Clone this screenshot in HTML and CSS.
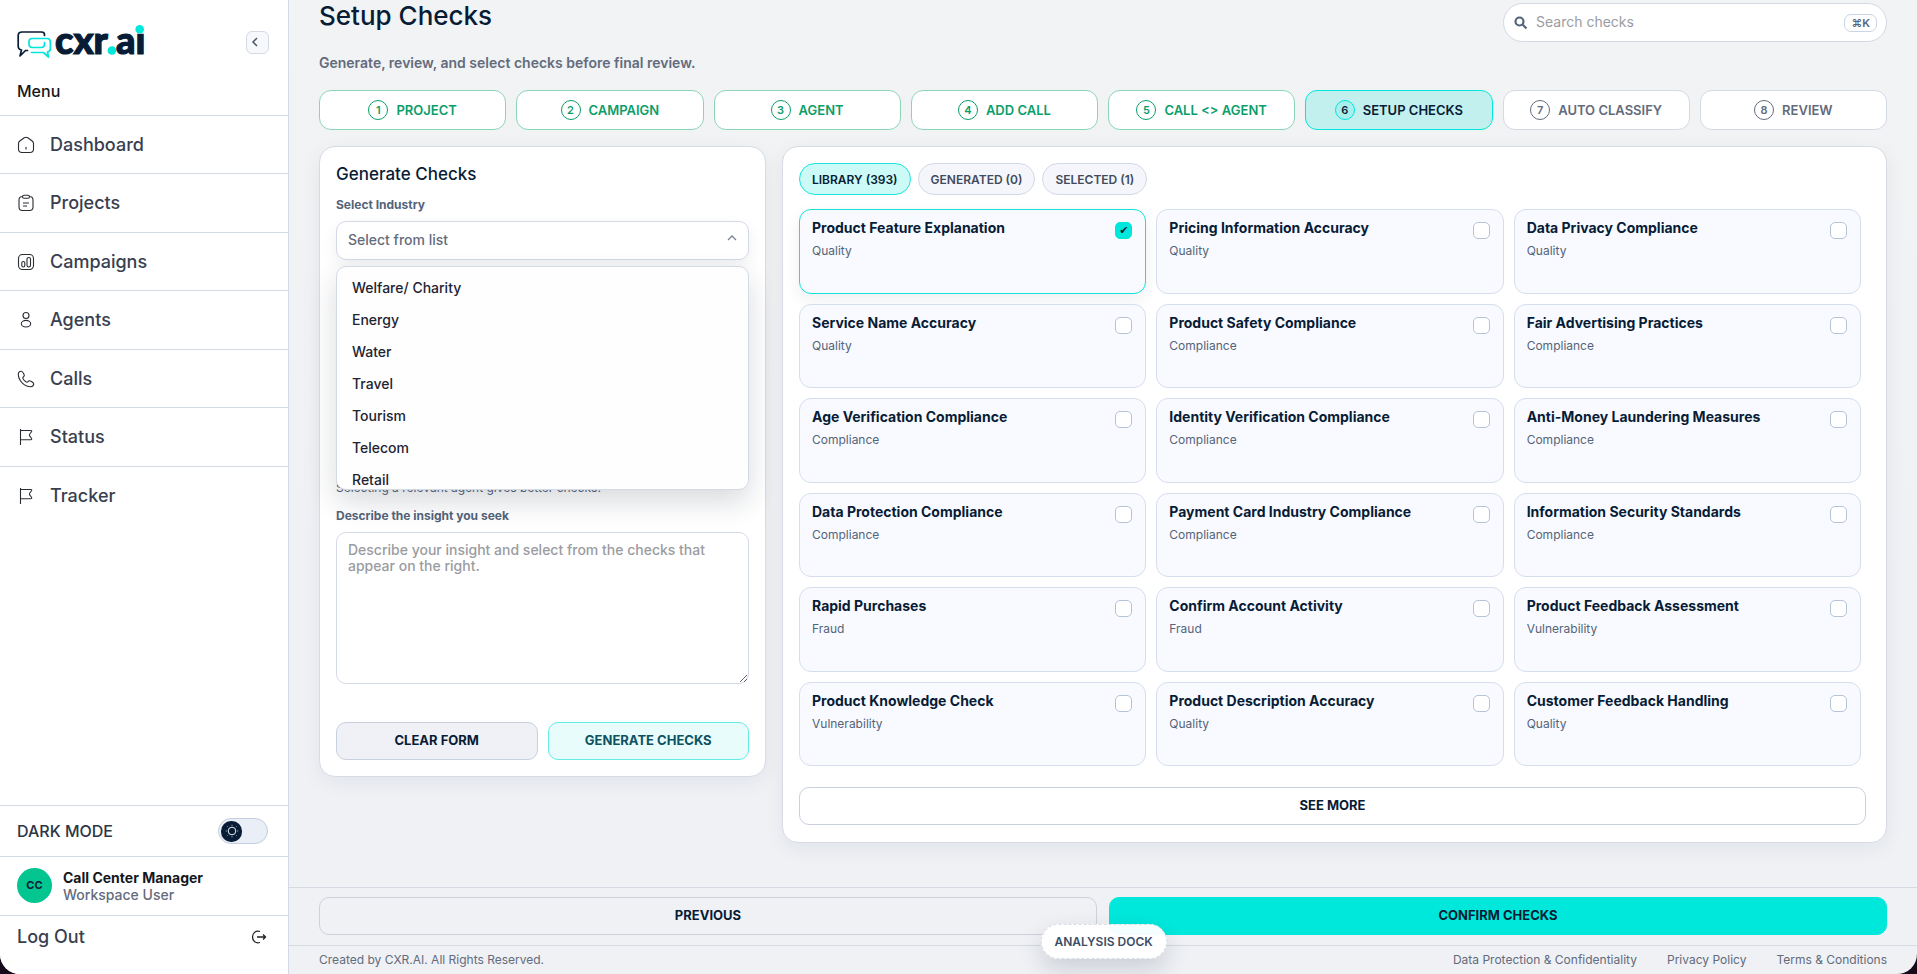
FILE: index.html
```html
<!DOCTYPE html>
<html lang="en">
<head>
<meta charset="utf-8">
<meta name="viewport" content="width=device-width, initial-scale=1">
<title>Setup Checks – cxr.ai</title>
<link rel="stylesheet" href="styles.css">
</head>
<body>
<div class="app">
  <aside class="sidebar">
    <div class="brand">
      <svg class="logo" width="130" height="38" viewBox="0 0 130 38" role="img" aria-label="cxr.ai">
        <g fill="none" stroke-width="1.7" stroke-linejoin="round" stroke-linecap="round">
          <path stroke="#081c36" d="M27.500 12.500V11.500Q27.500 9 24.500 9H5Q1.200 9 1.200 12.500V23Q1.200 26.500 4.500 27L3 33L8.500 27.500H10.500"/>
          <path stroke="#00e8dc" d="M14.500 29.500H26.500L31.500 34L30.500 29Q33.300 28.500 33.300 25.500V19Q33.300 15.500 30 15.500H15Q12 15.500 12 18.500V21Q12 24.500 15.500 24.500H24Q27.500 24.500 27.500 21V19.500"/>
        </g>
        <g class="logo-text">
          <text x="38" y="31">cxr</text>
          <text class="logo-accent" x="89" y="31">.</text>
          <text x="99" y="31">ai</text>
        </g>
        <rect x="117" y="0" width="12" height="10.500" fill="#fff"/>
        <circle cx="95" cy="27.500" r="4.200" fill="#00e8dc"/>
        <circle cx="122.700" cy="6.200" r="4.300" fill="#00e8dc"/>
      </svg>
      <button class="collapse" aria-label="Collapse menu"><svg width="16" height="16" viewBox="0 0 16 16"><path d="M9 4L5 8L9 12"/></svg></button>
    </div>
    <h2 class="menu-title">Menu</h2>
    <nav class="nav">
      <a href="#"><svg viewBox="0 0 18 18"><path d="M1.500 7.500Q1.500 6 2.800 5L7.200 1.800Q9 .7 10.800 1.800L15.200 5Q16.500 6 16.500 7.500V13Q16.500 16.500 13 16.500H5Q1.500 16.500 1.500 13ZM9 11V13.500"/></svg>Dashboard</a>
      <a href="#"><svg viewBox="0 0 18 18"><path d="M5.500 2.500Q2 2.500 2 6V13Q2 16.500 5.500 16.500H12.500Q16 16.500 16 13V6Q16 2.500 12.500 2.500M7 1.200H11Q12.500 1.200 12.500 2.700Q12.500 4.200 11 4.200H7Q5.500 4.200 5.500 2.700Q5.500 1.200 7 1.200ZM6 9H12M6 12H10"/></svg>Projects</a>
      <a href="#"><svg viewBox="0 0 18 18"><rect x="1.500" y="1.500" width="15" height="15" rx="4"/><rect x="4.800" y="8.500" width="3" height="5.500" rx="1.500"/><rect x="10" y="4.500" width="3.500" height="9.500" rx="1.700"/></svg>Campaigns</a>
      <a href="#"><svg viewBox="0 0 18 18"><circle cx="9" cy="4.500" r="3"/><ellipse cx="9" cy="12.700" rx="4.700" ry="3.300"/></svg>Agents</a>
      <a href="#"><svg viewBox="0 0 18 18"><path d="M4.200 1.300C2.300 1.300 1.300 2.700 1.300 4.300C1.300 10.500 7.500 16.700 13.700 16.700C15.500 16.700 16.700 15.500 16.700 13.800C16.700 12.600 13.300 10.700 12.200 10.700C11.200 10.700 11.200 12.200 10 12.200C8.800 12.200 5.800 9.200 5.800 8C5.800 6.800 7.300 6.800 7.300 5.600C7.300 4.500 5.500 1.300 4.200 1.300Z"/></svg>Calls</a>
      <a href="#"><svg viewBox="0 0 18 18"><path d="M3.500 1V17M3.500 2.500H13.500Q15.500 2.500 14.300 4L12.800 6Q12 7.200 12.800 8.200L14.300 10Q15.500 11.800 13.500 11.800H3.500"/></svg>Status</a>
      <a href="#"><svg viewBox="0 0 18 18"><path d="M3.500 1V17M3.500 2.500H13.500Q15.500 2.500 14.300 4L12.800 6Q12 7.200 12.800 8.200L14.300 10Q15.500 11.800 13.500 11.800H3.500"/></svg>Tracker</a>
    </nav>
    <div class="side-bottom">
      <div class="mode">
        <span>DARK MODE</span>
        <button class="switch" role="switch" aria-checked="false" aria-label="Dark mode"><span class="knob"><svg width="14" height="14" viewBox="0 0 14 14"><circle cx="7" cy="7" r="3.800"/><path d="M7 .8V1.600M7 12.400V13.200M.8 7H1.600M12.400 7H13.200M2.600 2.600L3 3M11 11L11.400 11.400M11.400 2.600L11 3M3 11L2.600 11.400"/></svg></span></button>
      </div>
      <div class="user">
        <span class="avatar">CC</span>
        <div><div class="user-name">Call Center Manager</div><div class="user-role">Workspace User</div></div>
      </div>
      <a class="logout" href="#">Log Out<svg width="18" height="18" viewBox="0 0 18 18"><path d="M10 3.500C5.500 2 2.500 5.500 2.500 9C2.500 12.500 5.500 16 10 14.500M7 9H15.500M13 6.500L15.500 9L13 11.500"/></svg></a>
    </div>
  </aside>

  <div class="main">
    <main class="content">
      <header class="head">
        <div>
          <h1>Setup Checks</h1>
          <p class="subtitle">Generate, review, and select checks before final review.</p>
        </div>
        <div class="search">
          <svg width="14" height="14" viewBox="0 0 14 14"><circle cx="5.500" cy="5.500" r="4"/><path d="M8.800 8.800L12.500 12.500"/></svg>
          <input type="search" placeholder="Search checks" aria-label="Search checks">
          <kbd>⌘K</kbd>
        </div>
      </header>

      <ol class="steps">
        <li class="done"><span class="num">1</span>PROJECT</li>
        <li class="done"><span class="num">2</span>CAMPAIGN</li>
        <li class="done"><span class="num">3</span>AGENT</li>
        <li class="done"><span class="num">4</span>ADD CALL</li>
        <li class="done"><span class="num">5</span>CALL &lt;&gt; AGENT</li>
        <li class="current" aria-current="step"><span class="num">6</span>SETUP CHECKS</li>
        <li><span class="num">7</span>AUTO CLASSIFY</li>
        <li><span class="num">8</span>REVIEW</li>
      </ol>

      <div class="columns">
        <form class="panel generate">
          <h2>Generate Checks</h2>
          <div class="field field-open">
            <label for="industry">Select Industry</label>
            <div class="select-wrap">
              <select id="industry"><option>Select from list</option></select>
              <svg class="chevron" width="12" height="12" viewBox="0 0 12 12"><path d="M2 8L6 4L10 8"/></svg>
              <ul class="options" role="listbox" aria-label="Industry">
                <li role="option">Welfare/ Charity</li>
                <li role="option">Energy</li>
                <li role="option">Water</li>
                <li role="option">Travel</li>
                <li role="option">Tourism</li>
                <li role="option">Telecom</li>
                <li role="option">Retail</li>
              </ul>
            </div>
            <p class="hint">Selecting an industry helps to tailor the checks.</p>
          </div>
          <div class="field">
            <label for="campaign">Select Campaign</label>
            <select id="campaign"><option>Select from list</option></select>
            <p class="hint">Selecting a campaign keeps checks in context.</p>
          </div>
          <div class="field">
            <label for="agent">Select Agent Type</label>
            <select id="agent"><option>Select from list</option></select>
            <p class="hint">Selecting a relevant agent gives better checks.</p>
          </div>
          <div class="field">
            <label for="insight">Describe the insight you seek</label>
            <textarea id="insight" placeholder="Describe your insight and select from the checks that appear on the right."></textarea>
          </div>
          <div class="form-actions">
            <button type="reset" class="btn btn-grey">CLEAR FORM</button>
            <button type="button" class="btn btn-mint">GENERATE CHECKS</button>
          </div>
        </form>

        <section class="panel library">
          <div class="tabs" role="tablist">
            <button class="tab active" role="tab" aria-selected="true">LIBRARY (393)</button>
            <button class="tab" role="tab">GENERATED (0)</button>
            <button class="tab" role="tab">SELECTED (1)</button>
          </div>
          <div class="cards">
            <label class="card selected"><span><b>Product Feature Explanation</b><small>Quality</small></span><input type="checkbox" checked></label>
            <label class="card"><span><b>Pricing Information Accuracy</b><small>Quality</small></span><input type="checkbox"></label>
            <label class="card"><span><b>Data Privacy Compliance</b><small>Quality</small></span><input type="checkbox"></label>
            <label class="card"><span><b>Service Name Accuracy</b><small>Quality</small></span><input type="checkbox"></label>
            <label class="card"><span><b>Product Safety Compliance</b><small>Compliance</small></span><input type="checkbox"></label>
            <label class="card"><span><b>Fair Advertising Practices</b><small>Compliance</small></span><input type="checkbox"></label>
            <label class="card"><span><b>Age Verification Compliance</b><small>Compliance</small></span><input type="checkbox"></label>
            <label class="card"><span><b>Identity Verification Compliance</b><small>Compliance</small></span><input type="checkbox"></label>
            <label class="card"><span><b>Anti-Money Laundering Measures</b><small>Compliance</small></span><input type="checkbox"></label>
            <label class="card"><span><b>Data Protection Compliance</b><small>Compliance</small></span><input type="checkbox"></label>
            <label class="card"><span><b>Payment Card Industry Compliance</b><small>Compliance</small></span><input type="checkbox"></label>
            <label class="card"><span><b>Information Security Standards</b><small>Compliance</small></span><input type="checkbox"></label>
            <label class="card"><span><b>Rapid Purchases</b><small>Fraud</small></span><input type="checkbox"></label>
            <label class="card"><span><b>Confirm Account Activity</b><small>Fraud</small></span><input type="checkbox"></label>
            <label class="card"><span><b>Product Feedback Assessment</b><small>Vulnerability</small></span><input type="checkbox"></label>
            <label class="card"><span><b>Product Knowledge Check</b><small>Vulnerability</small></span><input type="checkbox"></label>
            <label class="card"><span><b>Product Description Accuracy</b><small>Quality</small></span><input type="checkbox"></label>
            <label class="card"><span><b>Customer Feedback Handling</b><small>Quality</small></span><input type="checkbox"></label>
          </div>
          <button class="btn see-more">SEE MORE</button>
        </section>
      </div>
    </main>

    <div class="actions">
      <button class="btn btn-outline">PREVIOUS</button>
      <button class="btn btn-primary">CONFIRM CHECKS</button>
    </div>
    <footer class="footer">
      <span>Created by CXR.AI. All Rights Reserved.</span>
      <nav>
        <a href="#">Data Protection &amp; Confidentiality</a>
        <a href="#">Privacy Policy</a>
        <a href="#">Terms &amp; Conditions</a>
      </nav>
    </footer>
  </div>
  <button class="dock">ANALYSIS DOCK</button>
</div>
</body>
</html>
```
FILE: styles.css
```css
* { box-sizing: border-box; }

:root {
  --navy: #081c36;
  --cyan: #00e8dc;
  --line: #d3d9e5;
  --grey: #636b7c;
  --slate: #53647a;
}

body {
  margin: 0;
  background: #170a1a;
  font-family: Inter, "Liberation Sans", sans-serif;
  font-size: 14px;
  color: var(--navy);
}

h1, h2, p, ul, ol { margin: 0; padding: 0; }
ul, ol { list-style: none; }
a { color: inherit; text-decoration: none; }
button, input, select, textarea { font: inherit; color: inherit; }
button { cursor: pointer; }
svg { display: block; flex: none; fill: none; }

.app {
  position: relative;
  display: flex;
  min-height: 100vh;
  overflow: hidden;
  border-radius: 0 0 20px 20px;
  background: linear-gradient(#f1f3f4, #eff1f5 60%);
}

/* Sidebar */
.sidebar {
  flex: 0 0 289px;
  display: flex;
  flex-direction: column;
  background: #fff;
  border-right: 1px solid var(--line);
}

.brand {
  display: flex;
  justify-content: space-between;
  align-items: center;
  padding: 23px 19px 0 17px;
}

.logo { overflow: visible; }

.logo-text {
  font-family: Lato, sans-serif;
  font-weight: 900;
  font-size: 38px;
  fill: var(--navy);
  stroke: var(--navy);
  stroke-width: 1.2;
}

.logo-accent { fill: var(--cyan); stroke: none; }

.collapse {
  display: grid;
  place-items: center start;
  width: 23px;
  height: 23px;
  padding: 0 0 0 1px;
  border: 1px solid var(--line);
  border-radius: 6px;
  background: #f7f8fb;
}

.collapse path { stroke: #4b5565; stroke-width: 1.5; }

.menu-title {
  padding: 18px 17px 12px;
  font-size: 16px;
  line-height: 24px;
  font-weight: 500;
  color: #14171c;
}

.nav a {
  display: flex;
  align-items: center;
  gap: 15px;
  padding: 17px 17px 17px;
  border-top: 1px solid var(--line);
  font-size: 18px;
  line-height: 24px;
  font-weight: 500;
  color: #38404f;
}

.nav a:nth-child(odd) { padding-bottom: 16px; }
.nav svg { width: 18px; height: 18px; stroke: #2a2d33; stroke-width: 1.1; }

.side-bottom { margin-top: auto; color: #38404f; }
.side-bottom > * { border-top: 1px solid var(--line); }

.mode {
  display: flex;
  align-items: center;
  justify-content: space-between;
  padding: 12px 20px 12px 17px;
  font-size: 16px;
  font-weight: 500;
  color: #2c3546;
}

.switch {
  width: 50px;
  height: 26px;
  padding: 1px 2px;
  border: 1px solid #c3cede;
  border-radius: 13px;
  background: #e9eef7;
}

.knob {
  display: grid;
  place-items: center;
  width: 21px;
  height: 21px;
  border-radius: 10px;
  background: var(--navy);
}

.knob svg { stroke: #e8edf5; stroke-width: 1; }

.user {
  display: flex;
  align-items: center;
  gap: 11px;
  padding: 11px 17px 12px;
  font-size: 14px;
  line-height: 17px;
}

.avatar {
  display: grid;
  place-items: center;
  width: 35px;
  height: 35px;
  border-radius: 50%;
  background: #02c590;
  color: var(--navy);
  font-size: 11px;
  font-weight: 700;
}

.user-name { color: #14171c; font-weight: 700; }
.user-role { color: var(--grey); font-weight: 500; }

.logout {
  display: flex;
  align-items: center;
  justify-content: space-between;
  padding: 9px 20px 25px 17px;
  font-size: 18px;
  line-height: 24px;
  font-weight: 500;
}

.logout svg { stroke: #222; stroke-width: 1.3; }

/* Main column */
.main {
  flex: 1;
  min-width: 0;
  display: flex;
  flex-direction: column;
}

.content { flex: 1; padding: 0 30px 24px; }

.head {
  display: flex;
  justify-content: space-between;
  align-items: flex-start;
}

h1 {
  font-size: 26px;
  line-height: 32px;
  font-weight: 500;
}

.subtitle {
  padding: 21px 0 17px;
  font-size: 14px;
  line-height: 20px;
  font-weight: 600;
  color: var(--grey);
}

.search {
  display: flex;
  align-items: center;
  gap: 8px;
  width: 384px;
  height: 39px;
  margin-top: 3px;
  padding: 0 9px 0 10px;
  border: 1px solid var(--line);
  border-radius: 20px;
  background: #fff;
}

.search svg { stroke: var(--slate); stroke-width: 2.2; }

.search input {
  flex: 1;
  min-width: 0;
  padding: 0 0 2px;
  border: 0;
  outline: 0;
  background: none;
}

::placeholder { color: #9a9ca1; opacity: 1; }

kbd {
  padding: 0 6px;
  border: 1px solid #c9d4e4;
  border-radius: 7px;
  font: 600 11px/16px Inter, "DejaVu Sans", sans-serif;
  color: var(--slate);
}

.steps {
  display: grid;
  grid-template-columns: repeat(8, 1fr);
  gap: 10px;
}

.steps li {
  display: flex;
  align-items: center;
  justify-content: center;
  gap: 8px;
  height: 40px;
  border: 1px solid var(--line);
  border-radius: 12px;
  background: #fff;
  color: var(--grey);
  font-size: 13px;
  font-weight: 600;
}

.num {
  display: grid;
  place-items: center;
  width: 20px;
  height: 20px;
  border: 1px solid currentColor;
  border-radius: 50%;
  font-size: 11px;
}

.steps .done { color: #0a9e69; border-color: #8bd5b7; }
.steps .current { color: var(--navy); border-color: var(--cyan); background: #c1f0ee; }
.current .num { border-color: var(--cyan); background: #a9efeb; }

.columns {
  display: grid;
  grid-template-columns: 447fr 1105fr;
  align-items: start;
  gap: 16px;
  margin-top: 16px;
}

.panel {
  min-width: 0;
  padding: 16px;
  border: 1px solid #d6dbe4;
  border-radius: 16px;
  background: #fff;
  box-shadow: 0 6px 20px rgba(20, 30, 50, .06);
}

/* Generate form */
.generate h2 {
  font-size: 17px;
  line-height: 22px;
  font-weight: 500;
}

.field { padding-bottom: 12px; }
.field-open { padding-top: 12px; padding-bottom: 14px; }

.field label {
  display: block;
  padding-bottom: 8px;
  font-size: 12px;
  line-height: 16px;
  font-weight: 700;
  color: var(--slate);
}

.select-wrap { position: relative; }

select {
  display: block;
  width: 100%;
  height: 39px;
  padding: 0 11px 2px;
  appearance: none;
  border: 1px solid var(--line);
  border-radius: 10px;
  background: #fff;
  font-weight: 500;
  color: var(--grey);
}

.select-wrap select { box-shadow: 0 6px 16px rgba(20, 30, 50, .07); }

.chevron {
  position: absolute;
  top: 11px;
  right: 11px;
  stroke: #7d8592;
  stroke-width: 1.3;
}

.options {
  position: absolute;
  z-index: 2;
  top: 45px;
  left: 0;
  right: 0;
  height: 224px;
  padding: 5px;
  overflow: hidden;
  border: 1px solid var(--line);
  border-radius: 10px;
  background: #fefefe;
  box-shadow: 0 12px 28px rgba(20, 30, 50, .16);
}

.options li {
  padding: 6px 10px;
  font-size: 14px;
  line-height: 20px;
  font-weight: 500;
  color: #1d2432;
}

.hint {
  padding-top: 12px;
  font-size: 12px;
  line-height: 16px;
  color: var(--slate);
}

textarea {
  display: block;
  width: 100%;
  height: 152px;
  padding: 9px 11px;
  border: 1px solid var(--line);
  border-radius: 10px;
  line-height: 16px;
  font-weight: 500;
  resize: vertical;
}

.form-actions {
  display: grid;
  grid-template-columns: 1fr 1fr;
  gap: 10px;
  padding-top: 26px;
}

.btn {
  height: 38px;
  padding: 0 12px 2px;
  border: 1px solid #c9d0de;
  border-radius: 10px;
  background: #fff;
  font-size: 13px;
  font-weight: 700;
}

.btn-grey { background: #f0f1f6; }
.btn-mint { border-color: #62ece4; background: #e9fcfc; color: #0d5263; }

/* Library */
.library { padding-right: 20px; padding-bottom: 17px; }

.tabs { display: flex; gap: 7px; }

.tab {
  height: 32px;
  padding: 0 12px;
  border: 1px solid var(--line);
  border-radius: 16px;
  background: #f5f6fb;
  font-size: 12px;
  font-weight: 600;
  color: #414b5c;
}

.tab.active { border-color: #1be5db; background: #cbfaf7; color: var(--navy); }

.cards {
  display: grid;
  grid-template-columns: repeat(3, 1fr);
  grid-auto-rows: 1fr;
  gap: 10px;
  min-height: 557px;
  margin-top: 14px;
  padding-right: 5px;
}

.card {
  display: flex;
  justify-content: space-between;
  align-items: flex-start;
  padding: 8px 13px 8px 12px;
  border: 1px solid #d5deec;
  border-radius: 12px;
  background: #f9faff;
}

.card.selected { border-color: #12e2d8; box-shadow: 0 6px 16px rgba(20, 30, 50, .07); }

.card b {
  display: block;
  font-size: 14px;
  line-height: 20px;
  font-weight: 700;
}

.card small {
  display: block;
  padding-top: 5px;
  font-size: 12px;
  line-height: 16px;
  color: var(--slate);
}

.card input {
  display: grid;
  place-items: center;
  flex: none;
  width: 17px;
  height: 17px;
  margin: 4px 0 0;
  appearance: none;
  border: 1px solid #b5c3d6;
  border-radius: 5px;
  background: #fff;
}

.card input:checked { border-color: var(--cyan); background: var(--cyan); }

.card input:checked::before {
  content: "✔";
  font: 11px/11px "DejaVu Sans", sans-serif;
  color: var(--navy);
}

.see-more { display: block; width: 100%; margin-top: 21px; }

/* Bottom bars */
.actions {
  display: grid;
  grid-template-columns: 1fr 1fr;
  gap: 12px;
  padding: 9px 30px 10px;
  border-top: 1px solid #d6dae2;
}

.btn-outline { background: transparent; border-color: #cdd1da; }
.btn-primary { border-color: var(--cyan); background: var(--cyan); }

.footer {
  display: flex;
  justify-content: space-between;
  padding: 6px 30px;
  border-top: 1px solid #d6dae2;
  font-size: 12px;
  line-height: 16px;
  color: var(--grey);
}

.footer nav { display: flex; gap: 30px; }

.dock {
  position: absolute;
  left: 50%;
  bottom: 15px;
  margin-left: 82px;
  height: 35px;
  padding: 0 13px;
  border: 1px dashed #d9dde5;
  border-radius: 18px;
  background: rgba(255, 255, 255, .96);
  box-shadow: 0 10px 24px rgba(20, 30, 50, .16);
  font-size: 12px;
  font-weight: 600;
  color: #3c4d66;
}
```
